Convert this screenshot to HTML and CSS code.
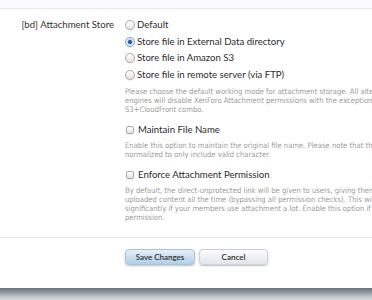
FILE: index.html
```html
<!DOCTYPE html>
<html lang="en">
<head>
  <meta charset="UTF-8" />
  <title>Options: Attachment Store</title>
  <link rel="stylesheet" href="styles.css">
</head>
<body>
  <div class="topbar"></div>

  <form class="xenform">
    <dl class="ctrl-unit">
      <dt>[bd] Attachment Store</dt>
      <dd>
        <ul class="radios">
          <li><label><input type="radio" name="store" value="default" /> Default</label></li>
          <li><label><input type="radio" name="store" value="local" checked /> Store file in External Data directory</label></li>
          <li><label><input type="radio" name="store" value="s3" /> Store file in Amazon S3</label></li>
          <li><label><input type="radio" name="store" value="ftp" /> Store file in remote server (via FTP)</label></li>
        </ul>
        <p class="explain">
          Please choose the default working mode for attachment storage. All alternative storage<br>
          engines will disable XenForo Attachment permissions with the exception of Amazon<br>
          S3+CloudFront combo.
        </p>

        <ul class="checks">
          <li class="first">
            <label><input type="checkbox" name="keep_name" /> Maintain File Name</label>
            <p class="explain">
              Enable this option to maintain the original file name. Please note that the file name will be<br>
              normalized to only include valid character.
            </p>
          </li>
          <li>
            <label><input type="checkbox" name="enforce_perm" /> Enforce Attachment Permission</label>
            <p class="explain">
              By default, the direct-unprotected link will be given to users, giving them access to<br>
              uploaded content all the time (bypassing all permission checks). This will save bandwidth<br>
              significantly if your members use attachment a lot. Enable this option if you need<br>
              permission.
            </p>
          </li>
        </ul>
      </dd>
    </dl>

    <div class="submit-unit">
      <button type="submit" class="button primary">Save Changes</button>
      <button type="reset" class="button">Cancel</button>
    </div>
  </form>

  <div class="footer-bar"></div>
</body>
</html>
```
FILE: styles.css
```css
body {
  margin: 0;
  width: 372px;
  height: 300px;
  overflow: hidden;
  background: #fff;
  font-family: 'Lato', sans-serif;
  color: #2b2b2b;
}

.topbar {
  height: 8px;
  background: #fbfbfe;
  border-bottom: 1px solid #e4ecf1;
}

.xenform {
  margin: 0;
}

/* label column + controls column */
.ctrl-unit {
  display: grid;
  grid-template-columns: 114px 1fr;
  column-gap: 11px;
  margin: 0;
  padding-top: 8px;
}
.ctrl-unit dt {
  text-align: right;
  font-size: 9.6px;
  line-height: 16.5px;
  white-space: nowrap;
  color: #333;
}
.ctrl-unit dd {
  margin: 0;
  min-width: 0;
}

.radios,
.checks {
  list-style: none;
  margin: 0;
  padding: 0;
}
.radios li {
  font-size: 9.6px;
  line-height: 16.5px;
  white-space: nowrap;
}
.checks li {
  margin-top: 7.5px;
}
.checks li.first {
  margin-top: 8px;
}
.checks label {
  display: flex;
  font-size: 9.6px;
  line-height: 16px;
  white-space: nowrap;
  padding-left: 1px;
}

label {
  display: flex;
  align-items: center;
  gap: 2px;
}

input[type="radio"],
input[type="checkbox"] {
  -webkit-appearance: none;
  appearance: none;
  margin: 0;
  flex: none;
  border: 1px solid #a9a9a9;
  background: linear-gradient(#ffffff, #e4e4e4);
  box-shadow: 0 1px 1px rgba(0, 0, 0, 0.08);
}
input[type="radio"] {
  width: 10px;
  height: 10px;
  border-radius: 50%;
}
input[type="radio"]:checked {
  border-color: #7d9ec0;
  background: radial-gradient(circle, #1f4f8a 0, #2c64a6 1.6px, #a8c4e2 2.4px, #e9f1fa 3px, #f6f9fc 5px);
}
input[type="checkbox"] {
  width: 8px;
  height: 8px;
  border-radius: 2px;
  margin-right: 2px;
}

.explain {
  margin: 4px 0 0;
  font-family: 'DejaVu Sans Condensed', 'DejaVu Sans', sans-serif;
  font-size: 7.6px;
  line-height: 9px;
  color: #9b9b9b;
  white-space: nowrap;
}
.checks .explain {
  margin-top: 3px;
}

.submit-unit {
  margin-top: 15.5px;
  border-top: 1px solid #e2ebef;
  padding: 11px 0 0 125px;
  display: flex;
  gap: 4px;
}
.button {
  height: 16px;
  padding: 0;
  border: 1px solid #c9d2da;
  border-radius: 4px;
  font-family: 'Lato', sans-serif;
  font-size: 8px;
  font-weight: 600;
  color: #2f2f2f;
  background: linear-gradient(#fdfdfe, #e3e5eb);
  box-shadow: 0 1px 2px rgba(0, 0, 0, 0.25);
  width: 69px;
}
.button.primary {
  width: 70px;
  border-color: #a9c3da;
  background: linear-gradient(#e4eff8, #b2cfe7);
}

.footer-bar {
  margin-top: 23px;
  height: 12px;
  background: linear-gradient(#68727d, #8e979f 35%, #c3c9cb 75%, #d5d9d8);
}
```
